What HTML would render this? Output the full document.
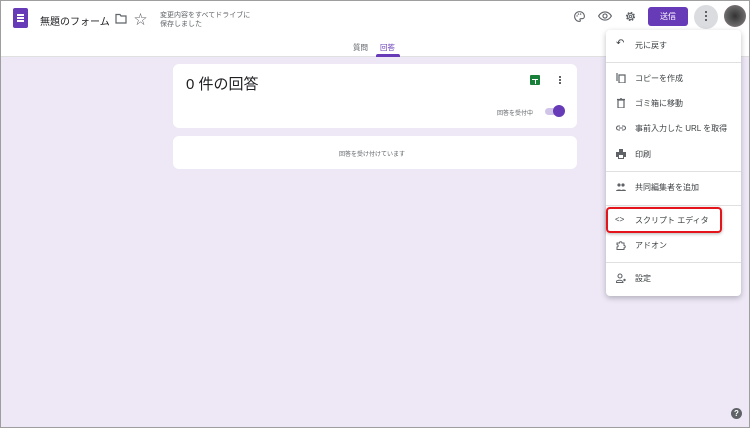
<!DOCTYPE html>
<html><head><meta charset="utf-8"><style>
*{margin:0;padding:0;box-sizing:border-box}
body{width:750px;height:428px;overflow:hidden;font-family:"Liberation Sans","Noto Sans CJK JP",sans-serif;background:#ede7f6;position:relative;color:#202124}
.frame{position:absolute;inset:0;border:1px solid #9e9e9e;pointer-events:none;z-index:10}
.hdr{position:absolute;left:0;top:0;width:750px;height:57px;background:#fff;border-bottom:1px solid #e0e0e0}
.abs{position:absolute}
.card{position:absolute;background:#fff;border-radius:6px;left:173px;width:404px}
.menu{position:absolute;left:606px;top:30px;width:135px;height:266px;background:#fff;border-radius:4px;box-shadow:0 2px 6px rgba(0,0,0,.25)}
.mi{position:absolute;left:0;font-size:8px;color:#3c4043}
.mi .t{position:absolute;left:29px;top:-5px;white-space:nowrap}
.mi .i{position:absolute;left:10px;top:-5px;width:10px;height:10px}
.div{position:absolute;left:0;width:135px;height:1px;background:#e0e0e0}
</style></head><body>
<div class="hdr"></div>
<div class="abs" style="left:13px;top:8px;width:15px;height:20px;background:#673ab7;border-radius:2px"></div>
<div class="abs" style="left:17px;top:14px;width:7px;height:1.5px;background:#fff;box-shadow:0 3px 0 #fff,0 6px 0 #fff"></div>
<div class="abs" style="left:40px;top:13px;font-size:10px;color:#202124">無題のフォーム</div>
<svg class="abs" style="left:115px;top:13px" width="12" height="11" viewBox="0 0 12 11"><path d="M1 1.5h4l1 1.5h5v7H1z" fill="none" stroke="#5f6368" stroke-width="1.2"/></svg>
<div class="abs" style="left:134px;top:9px;font-size:13px;color:#5f6368">☆</div>
<div class="abs" style="left:160px;top:11px;font-size:7px;color:#5f6368;line-height:9px">変更内容をすべてドライブに<br>保存しました</div>
<svg class="abs" style="left:573px;top:10px" width="13" height="13" viewBox="0 0 24 24"><path d="M12 3a9 9 0 000 18c1 0 1.5-.7 1.5-1.5 0-.8-.7-1-.7-2 0-1 .8-1.5 1.7-1.5H17a4 4 0 004-4c0-5-4-9-9-9z" fill="none" stroke="#5f6368" stroke-width="2"/><circle cx="7.5" cy="11" r="1.3" fill="#5f6368"/><circle cx="10" cy="7.5" r="1.3" fill="#5f6368"/><circle cx="14" cy="7.5" r="1.3" fill="#5f6368"/></svg>
<svg class="abs" style="left:598px;top:11px" width="14" height="10" viewBox="0 0 24 16"><path d="M1 8c3-5 7-7 11-7s8 2 11 7c-3 5-7 7-11 7S4 13 1 8z" fill="none" stroke="#5f6368" stroke-width="2"/><circle cx="12" cy="8" r="3.5" fill="none" stroke="#5f6368" stroke-width="2"/></svg>
<svg class="abs" style="left:624px;top:10px" width="13" height="13" viewBox="0 0 24 24"><circle cx="12" cy="12" r="7" fill="none" stroke="#5f6368" stroke-width="3" stroke-dasharray="3 2.5"/><circle cx="12" cy="12" r="5.5" fill="none" stroke="#5f6368" stroke-width="2"/><circle cx="12" cy="12" r="2.2" fill="none" stroke="#5f6368" stroke-width="1.8"/></svg>
<div class="abs" style="left:648px;top:7px;width:40px;height:19px;background:#673ab7;border-radius:3px;color:#fff;font-size:8px;text-align:center;line-height:19px">送信</div>
<div class="abs" style="left:694px;top:5px;width:24px;height:24px;border-radius:50%;background:#dadce0"></div>
<div class="abs" style="left:705px;top:11px;width:2px;height:2px;background:#5f6368;box-shadow:0 4px 0 #5f6368,0 8px 0 #5f6368"></div>
<div class="abs" style="left:724px;top:5px;width:22px;height:22px;border-radius:50%;background:radial-gradient(#333,#666 60%,#b89 100%)"></div>
<div class="abs" style="left:353px;top:42px;font-size:7.5px;color:#5f6368">質問</div>
<div class="abs" style="left:380px;top:42px;font-size:7.5px;color:#673ab7">回答</div>
<div class="abs" style="left:376px;top:54px;width:24px;height:3px;background:#673ab7;border-radius:2px 2px 0 0"></div>

<div class="card" style="top:64px;height:64px"></div>
<div class="abs" style="left:186px;top:73px;font-size:15px;color:#202124">0 件の回答</div>
<div class="abs" style="left:530px;top:75px;width:10px;height:10px;background:#188038;border-radius:1px"></div>
<div class="abs" style="left:532px;top:79px;width:6px;height:1px;background:#fff"></div>
<div class="abs" style="left:535px;top:79px;width:1px;height:5px;background:#fff"></div>
<div class="abs" style="left:559px;top:76px;width:2px;height:2px;background:#5f6368;box-shadow:0 3px 0 #5f6368,0 6px 0 #5f6368"></div>
<div class="abs" style="left:497px;top:108px;font-size:6px;color:#5f6368">回答を受付中</div>
<div class="abs" style="left:545px;top:108px;width:18px;height:7px;border-radius:4px;background:#d1c4e9"></div>
<div class="abs" style="left:553px;top:105px;width:12px;height:12px;border-radius:50%;background:#673ab7"></div>
<div class="card" style="top:136px;height:33px"></div>
<div class="abs" style="left:339px;top:149px;font-size:6px;color:#5f6368">回答を受け付けています</div>

<div class="menu">
<div class="mi" style="top:15px"><span class="i" style="font-size:10px;top:-7px">↶</span><span class="t">元に戻す</span></div>
<div class="div" style="top:32px"></div>
<div class="mi" style="top:48px"><svg class="i" viewBox="0 0 10 10"><path d="M3 2h6v8H3zM1 0v8" fill="none" stroke="#5f6368" stroke-width="1.2"/></svg><span class="t">コピーを作成</span></div>
<div class="mi" style="top:73px"><svg class="i" viewBox="0 0 10 10"><path d="M2 2h6v8H2zM1 1.5h8M4 0h2" fill="none" stroke="#5f6368" stroke-width="1.2"/></svg><span class="t">ゴミ箱に移動</span></div>
<div class="mi" style="top:98px"><svg class="i" viewBox="0 0 10 10"><path d="M4 3H2.5a2 2 0 000 4H4M6 3h1.5a2 2 0 010 4H6M3 5h4" fill="none" stroke="#5f6368" stroke-width="1.1"/></svg><span class="t">事前入力した URL を取得</span></div>
<div class="mi" style="top:124px"><svg class="i" viewBox="0 0 10 10"><path d="M3 0h4v3H3zM0 3h10v5H8v2H2V8H0z" fill="#5f6368"/><rect x="3" y="6" width="4" height="3" fill="#fff"/></svg><span class="t">印刷</span></div>
<div class="div" style="top:141px"></div>
<div class="mi" style="top:157px"><svg class="i" viewBox="0 0 10 10"><circle cx="3" cy="3" r="1.6" fill="#5f6368"/><circle cx="7" cy="3" r="1.6" fill="#5f6368"/><path d="M0 9c0-2 6-2 6 0M5 9c0-2 5-2 5 0" fill="#5f6368"/></svg><span class="t">共同編集者を追加</span></div>
<div class="div" style="top:175px"></div>
<div class="mi" style="top:190px"><span class="i" style="font-size:8px;top:-5px;left:9px">&lt;&gt;</span><span class="t">スクリプト エディタ</span></div>
<div class="mi" style="top:215px"><svg class="i" viewBox="0 0 10 10"><path d="M1 3h2.5a1.2 1.2 0 012.4 0H8v2.5a1.2 1.2 0 010 2.4V9.5H1V7a1.2 1.2 0 000-2.4z" fill="none" stroke="#5f6368" stroke-width="1"/></svg><span class="t">アドオン</span></div>
<div class="div" style="top:232px"></div>
<div class="mi" style="top:248px"><svg class="i" viewBox="0 0 10 10"><circle cx="4" cy="3" r="2" fill="none" stroke="#5f6368" stroke-width="1.1"/><path d="M0 9.5c0-3 7-3 7 0z" fill="none" stroke="#5f6368" stroke-width="1.1"/><circle cx="8.5" cy="7" r="1.2" fill="#5f6368"/></svg><span class="t">設定</span></div>
</div>
<div class="abs" style="left:606px;top:207px;width:116px;height:26px;border:2.5px solid #e5141b;border-radius:4px;box-shadow:0 1px 3px rgba(0,0,0,.3)"></div>
<div class="abs" style="left:731px;top:408px;width:11px;height:11px;border-radius:50%;background:#5f6368;color:#fff;font-size:8px;font-weight:bold;text-align:center;line-height:11px">?</div>
<div class="frame"></div>
</body></html>
